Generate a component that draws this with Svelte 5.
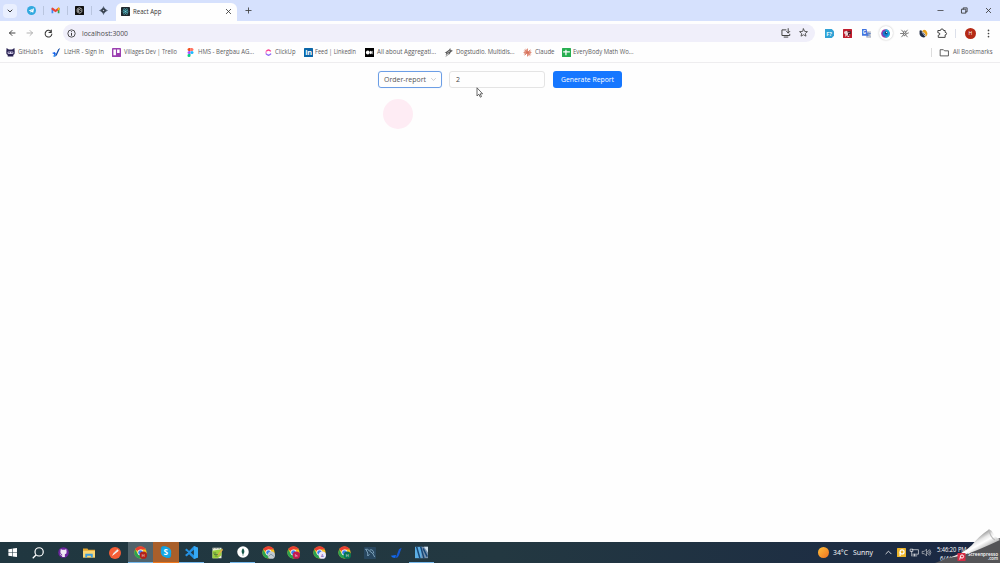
<script>
  const chrome = `<circle cx="8" cy="8" r="7.5" fill="#f8c31c"/><path d="M8 8L1.5 4.2A7.5 7.5 0 0 1 14.5 4.2H8Z" fill="#e93f32"/><path d="M1.5 4.2A7.5 7.5 0 0 0 8 15.5L11.3 9.8 8 8 4.8 9.9Z" fill="#2aa350"/><circle cx="8" cy="8" r="3.6" fill="#fff"/><circle cx="8" cy="8" r="2.8" fill="#3d7ee8"/>`;
  const chromeBadge = (color, letter) => chrome + `<circle cx="11.5" cy="11.3" r="4.5" fill="${color}"/><text x="11.5" y="13.2" text-anchor="middle" font-size="5" fill="${color === '#eee8fa' ? '#664baf' : '#fff'}">${letter}</text>`;
  const line = (d, color = '#444', w = 1.5) => `<path d="${d}" fill="none" stroke="${color}" stroke-width="${w}" stroke-linecap="round" stroke-linejoin="round"/>`;

  const icons = {
    down: line('M4 6L8 10L12 6', '#333', 2),
    selectDown: line('M1.5 4.5L8 11L14.5 4.5', '#999', 1.5),
    telegram: `<circle cx="8" cy="8" r="8" fill="#31a9df"/><path d="M3 8L12.5 4L11 12L8 10L6.5 12L6 9.3Z" fill="#fff"/><path d="M6 9.3L10.5 6" stroke="#80c5df"/>`,
    gmail: `<path d="M1 13V4l3 2v7z" fill="#4285f4"/><path d="M12 13V6l3-2v9z" fill="#34a853"/><path d="M1 3.5Q2 2 4 3.5L8 6.8L12 3.5Q14 2 15 3.5V6L8 11L1 6Z" fill="#e94335"/><path d="M12 3.5q2-1.5 3 0V6l-3 2z" fill="#fbbc04"/>`,
    gpt: `<rect width="16" height="16" rx="1" fill="#111"/><path d="M8 2.7L12.3 5.2V10.5L8 13.2L3.7 10.5V5.2ZM5.5 3.9V9.5L10 12M10.6 4.2L5.5 7V12M12 9L7 6" fill="none" stroke="#ddd" stroke-width="1"/>`,
    cross: `<path d="M8 0L10.5 5L16 8L10.5 11L8 16L5.5 11L0 8L5.5 5Z" fill="#59677b"/><circle cx="8" cy="8" r="4" fill="#343d49"/><circle cx="8" cy="8" r="1.3" fill="#c4cadb"/>`,
    react: `<rect width="16" height="16" rx="1.5" fill="#20272c"/><g fill="none" stroke="#51b5c3" stroke-width=".9"><ellipse cx="8" cy="8" rx="6" ry="2.3"/><ellipse cx="8" cy="8" rx="6" ry="2.3" transform="rotate(60 8 8)"/><ellipse cx="8" cy="8" rx="6" ry="2.3" transform="rotate(120 8 8)"/></g><circle cx="8" cy="8" r="1.2" fill="#6bd6df"/>`,
    close: line('M3 3L13 13M13 3L3 13', '#333', 1.9),
    plus: line('M2 8H14M8 2V14', '#444', 2),
    min: line('M2 8H14', '#333', 1.7),
    restore: line('M2 5H11V14H2ZM5 5V2H14V11H11', '#333', 1.9),
    back: line('M14 8H3M8 3L3 8L8 13', '#333', 1.8),
    forward: line('M2 8H13M8 3L13 8L8 13', '#aaa', 1.8),
    reload: line('M13 5A6 6 0 1 0 14 9M13 2V6H9', '#333', 1.8),
    info: `<circle cx="8" cy="8" r="6.5" fill="none" stroke="#333" stroke-width="1.5"/><path d="M8 7v5M8 4v1.5" stroke="#333" stroke-width="1.7"/>`,
    install: line('M8 3H1.5V12H14V10M5 14.5H11M11.5 1V8M9 5.5L11.5 8L14 5.5', '#444', 1.6),
    star: line('M8 1.5L10 6L15 6.5L11.3 9.7L12.4 14.5L8 12L3.6 14.5L4.7 9.7L1 6.5L6 6Z', '#444', 1.5),
    github: `<path d="M1 0L5 2.5H11L15 0L15.5 7Q16 12 13 12.5V15H3V12.5Q0 12 .5 7Z" fill="#292252"/><rect x="2.8" y="6" width="10.4" height="4.5" rx="2.2" fill="#d9d3ef"/><path d="M5.5 6.5v3M10.5 6.5v3" stroke="#292252" stroke-width="1.8"/>`,
    liz: `<path d="M14.5 0L9 12Q8 15 5 15L11 2Z" fill="#174ea6"/><path d="M0 9L5 7L7 10L5 14Q4 10 0 9Z" fill="#0f60ee"/><path d="M1 14L6 12L5 16Z" fill="#2389f2"/>`,
    trello: `<rect width="16" height="16" rx="1.5" fill="#9b3fb0"/><path d="M2.5 2.5H7V13H2.5ZM9 2.5H13.5V9H9Z" fill="#fff"/>`,
    figma: `<path d="M8 0H5.5a2.7 2.7 0 0 0 0 5.4H8Z" fill="#f24e1e"/><path d="M8 0h2.5a2.7 2.7 0 0 1 0 5.4H8Z" fill="#ff7262"/><path d="M8 5.4H5.5a2.7 2.7 0 0 0 0 5.4H8Z" fill="#a259ff"/><circle cx="10.7" cy="8" r="2.7" fill="#1abcfe"/><path d="M5.5 10.8H8v2.5a2.7 2.7 0 1 1-2.5-2.5Z" fill="#0acf83"/>`,
    clickup: `<path d="M4 6Q8 1 12 6" fill="none" stroke="#fa3b91" stroke-width="2.4"/><path d="M3.5 10Q8 15.5 12.5 10" fill="none" stroke="#8b60f5" stroke-width="2.6"/><path d="M3.5 6v4" stroke="#f25fc0" stroke-width="1.6"/>`,
    linkedin: `<rect width="16" height="16" rx="1" fill="#0a66a8"/><text x="2" y="13" font-size="13" font-weight="700" fill="#fff">in</text>`,
    medium: `<rect width="16" height="16" fill="#000"/><circle cx="5" cy="8" r="3.4" fill="#fff"/><ellipse cx="10.4" cy="8" rx="1.8" ry="3.2" fill="#fff"/><path d="M13.5 5v6" stroke="#fff"/>`,
    dog: `<path d="M1 9L9 3L11 0L12 4L16 5L11 8L9 12L8 9L3 13L4 9Z" fill="#555"/><path d="M3 15L12 8M7 7L14 4" stroke="#555" stroke-width="1.2"/><path d="M6 8L11 5" stroke="#fff"/>`,
    claude: `<path d="M8 1V15M1 8H15M3 3L13 13M13 3L3 13M5 1.5L11 14.5M1.5 11L14.5 5M1.5 5L14.5 11" stroke="#d66e55" stroke-width="1.4"/>`,
    sheet: `<rect width="16" height="16" rx="1" fill="#27ae50"/><path d="M7 3V13M2 7H14" stroke="#fff" stroke-width="2.2"/>`,
    folder: line('M1 3H6L8 5H15V14H1Z', '#444', 1.5),
    fontx: `<path d="M0 0H12L16 4V12L12 16H0Z" fill="#31a2d5"/><text x="2" y="12" font-size="10" font-weight="700" fill="#e7faff">F?</text>`,
    redx: `<rect width="16" height="16" rx="1" fill="#bf1d2d"/><path d="M2 5L6 3L9 5H14V8L11 10V14H8V10L4 14V9L2 8Z" fill="#ecd6d8"/><path d="M8 5H13V8H10V12" stroke="#43121c" fill="none" stroke-width="2"/>`,
    translate: `<path d="M5 4H16V16H8Z" fill="#c8cbd2"/><path d="M0 0H8L11 12H0Z" fill="#4174df"/><text x="1.5" y="9" font-size="8" font-weight="700" fill="#fff">G</text>${line('M9 8H15M12 6V8M14 8Q12 12 9 13M10 9L14 13', '#4775ca', 1)}`,
    eye: `<circle cx="8" cy="8" r="7.7" fill="#9a39ad"/><path d="M8 .3A7.7 7.7 0 0 1 8 15.7Z" fill="#18b6da"/><circle cx="8" cy="8" r="5" fill="#197bd2"/><circle cx="9" cy="7" r="2.4" fill="#154370"/><circle cx="10" cy="6" r="1" fill="#fff"/>`,
    bug: line('M3 2L13 14M13 2L10 6M1 8H6M10 9L15 7M3 14L6 10M7 4Q4 8 7 12Q12 12 10 5Z', '#737373', 1.6),
    swirl: `<path d="M1 3Q3 1 5 3L11 10Q13 14 8 15Q2 14 1 9Z" fill="#222f48"/><path d="M6 4Q7 0 12 2Q18 8 12 14Q13 8 6 4Z" fill="#eaa21c"/><path d="M5 5L11 13" stroke="#fff" stroke-width="1.2"/>`,
    puzzle: line('M2 4H5.5Q5.5 1.5 8 1.5Q10.5 1.5 10.5 4H13V7Q15.3 7 15.3 9Q15.3 11 13 11V15H2V11.5Q4.6 11.5 4.6 9.5Q4.6 7.5 2 7.5Z', '#444', 1.6),
    menu: `<g fill="#444"><circle cx="8" cy="2.5" r="1.5"/><circle cx="8" cy="8" r="1.5"/><circle cx="8" cy="13.5" r="1.5"/></g>`,
    win: `<path d="M2 3.2L7.4 2.4V7.5H2ZM8.2 2.3L14.5 1.5V7.5H8.2ZM2 8.4H7.4V13.6L2 12.8ZM8.2 8.4H14.5V14.5L8.2 13.7Z" fill="#fff"/>`,
    search: `<circle cx="9.5" cy="6.5" r="5.5" fill="none" stroke="#fff" stroke-width="1.6"/><path d="M5.6 10.4L1 15" stroke="#fff" stroke-width="1.7"/>`,
    githubT: `<circle cx="8" cy="8" r="7.7" fill="#6b249d"/><path d="M4 3L6 4H10L12 3L12.5 7Q13 10 10 10.5V14.5H6V10.5Q3 10 3.5 7Z" fill="#eee9f4"/><path d="M3 10Q4 13 6 12" stroke="#eee" fill="none"/>`,
    explorer: `<path d="M0 2H6L7 3.5H16V14H0Z" fill="#e6a72e"/><path d="M0 5H16V14H0Z" fill="#f9d675"/><path d="M3 14V9H13V14H10.5V11.5H5.5V14Z" fill="#3d9de0"/>`,
    postman: `<circle cx="8" cy="8" r="8" fill="#f45d36"/><path d="M4 12L6 8L11 3L13 5L8 9Z" fill="#fff"/><path d="M6 9L11 4" stroke="#b8b1ab"/>`,
    chromeH: chromeBadge('#b52118', 'H'),
    skype: `<rect x="1" y="0" width="9" height="9" rx="4.5" fill="#169bd7"/><rect x="6" y="7" width="9" height="9" rx="4.5" fill="#169bd7"/><circle cx="8" cy="8" r="7" fill="#16a7e4"/><text x="4.8" y="12" font-size="11" font-weight="700" fill="#fff">S</text>`,
    code: `<path d="M11 0L16 2V14L11 16L5 10L2 13L0 11L4 8L0 5L2 3L5 6Z" fill="#2492e4"/><path d="M11 4.5V11.5L7 8Z" fill="#203c4b"/><path d="M11 0L16 2V14L11 16Z" fill="#36aaf5"/>`,
    note: `<path d="M2 1H14V15H2Z" fill="#e9edda"/><path d="M2 5L14 3V11L9 15H2Z" fill="#9bd13e"/><path d="M3 2H13" stroke="#777" stroke-dasharray="1 1"/><path d="M3 8H7M4 10H10M5 12H9" stroke="#486a38"/><path d="M15 2L9 10L8 12L10 11L16 4Z" fill="#e1ac4a"/>`,
    mongo: `<circle cx="8" cy="8" r="7.7" fill="#fff"/><path d="M8 3Q11.5 7 8.4 11V13H7.6V11Q4.5 7 8 3" fill="#165849"/>`,
    chromeA: chrome + `<circle cx="11.5" cy="11.3" r="4.5" fill="#c4cbd0"/><path d="M8 13L11 10L15 13" stroke="#7894a4" fill="none"/>`,
    chromeB: chromeBadge('#c41850', 'h'),
    chromeC: chromeBadge('#eee8fa', 'A'),
    chromeD: chromeBadge('#087451', 'H'),
    mysql: `<rect width="16" height="16" rx="1" fill="#28475f"/>${line('M2 3Q5 2 7 5L12 9L14 13M3 4L5 8V12L7 10M8 4Q12 2 13 8', '#86abc4', 1.2)}`,
    lizT: `<path d="M15.5 1L12 11Q11 14.5 7.5 14.5L12 3Z" fill="#1558d2"/><path d="M1 11.5L8 10.5L7 14.5Q3 14.5 1 11.5Z" fill="#126af3"/>`,
    press: `<path d="M0 1H9V15H0Z" fill="#5caee3"/><path d="M8 1H16V15H8Z" fill="#7891ac"/><path d="M2 1L6 15M7 1L11 15M10 3L15 13" stroke="#174777" stroke-width="1.8"/><path d="M11 1L16 8V1" fill="#d2e2ee"/>`,
    up: line('M2 11L8 5L14 11', '#fff', 1.8),
    p: `<rect width="16" height="16" rx="1" fill="#ecb52b"/><circle cx="9" cy="7" r="3.6" fill="none" stroke="#fff" stroke-width="2"/><path d="M5.5 7V14" stroke="#fff" stroke-width="2"/>`,
    net: line('M4 3H15V11H5M8 11V14M5 14H12M1 2H5V6H1ZM3 6V14', '#fff', 1.1),
    sound: line('M1 6H4L8 2V14L4 10H1ZM10 6Q12 8 10 10M12 4Q15 8 12 12M14 3Q18 8 14 13', '#ddd', 1),
    screenpresso: `<rect width="16" height="16" rx="1" fill="#d72c45"/><circle cx="9" cy="7" r="3.2" fill="none" stroke="#fff" stroke-width="2"/><path d="M6 7L4.5 13" stroke="#fff" stroke-width="2"/>`
  };

  const pinned = [['telegram', 9], ['gmail', 9], ['gpt', 9], ['cross', 9]];
  const bookmarks = [
    ['github', 'GitHub1s', 25, 46], ['liz', 'LizHR - Sign In', 40, 60], ['trello', 'Villages Dev | Trello', 53, 74],
    ['figma', 'HMS - Bergbau AG...', 56, 77.5], ['clickup', 'ClickUp', 20.5, 40], ['linkedin', 'Feed | LinkedIn', 41, 61.5],
    ['medium', 'All about Aggregati...', 59, 79], ['dog', 'Dogstudio. Multidis...', 58.5, 79],
    ['claude', 'Claude', 19.5, 38.5], ['sheet', 'EveryBody Math Wo...', 60.5, 75]
  ];
  const extensions = ['fontx', 'redx', 'translate', 'eye', 'bug', 'swirl', 'puzzle'];
  const tasks = [
    ['win'], ['search', '', 12], ['githubT'], ['explorer', '', 12], ['postman', '', 12], ['chromeH', 'active line', 13],
    ['skype', 'orange', 12], ['code', 'line', 13], ['note', '', 12], ['mongo', 'line', 12], ['chromeA', '', 13], ['chromeB', '', 13],
    ['chromeC', '', 13], ['chromeD', '', 13], ['mysql', '', 12], ['lizT', '', 12], ['press', 'line', 13]
  ];
</script>

{#snippet icon(name, size = 10)}
  <svg class="icon" width={size} height={size} viewBox="0 0 16 16">{@html icons[name]}</svg>
{/snippet}

{#snippet label(text, width, size, color)}
  <svg class="label" {width} height={size + 4}><text x="0" y={size + 1} font-size={size} fill={color} textLength={width} lengthAdjust="spacingAndGlyphs">{text}</text></svg>
{/snippet}

<div class="screen">
  <header>
    <div class="tabs">
      <button class="tabsearch" aria-label="Search tabs">{@render icon('down', 8)}</button>
      {#each pinned as [name, size], i}
        <div class="pinned" class:last={i === 3}>{@render icon(name, size)}</div>
      {/each}
      <div class="tab">
        {@render icon('react', 9)}
        {@render label('React App', 28.5, 6.5, '#333')}
        <span class="tabclose">{@render icon('close', 7)}</span>
      </div>
      <div class="newtab">{@render icon('plus', 7)}</div>
      <div class="window">{@render icon('min', 7)}{@render icon('restore', 7)}{@render icon('close', 7)}</div>
    </div>
    <div class="toolbar">
      <div class="nav">{@render icon('back', 8)}{@render icon('forward', 8)}{@render icon('reload', 9)}</div>
      <div class="address">
        {@render icon('info', 9)}
        {@render label('localhost:3000', 46, 7, '#4b4b4f')}
        <div class="pageactions">{@render icon('install', 10)}{@render icon('star', 9)}</div>
      </div>
      <div class="extensions">
        {#each extensions as name}<span class:round={name === 'eye'}>{@render icon(name, name === 'puzzle' ? 10 : 9)}</span>{/each}
      </div>
      <div class="divider"></div>
      <div class="profile">H</div>
      <div class="menu">{@render icon('menu', 9)}</div>
    </div>
    <nav class="bookmarks">
      {#each bookmarks as [name, text, width, cell]}
        <div class="bookmark" style:width="{cell}px">{@render icon(name, 9)}{@render label(text, width, 6.3, '#5c5c60')}</div>
      {/each}
      <div class="all">{@render icon('folder', 9)}{@render label('All Bookmarks', 39.5, 6.3, '#5c5c60')}</div>
    </nav>
  </header>

  <main>
    <div class="form">
      <div class="select">{@render label('Order-report', 42, 7.2, '#555')}<span>{@render icon('selectDown', 5)}</span></div>
      <div class="input">{@render label('2', 4, 7.2, '#444')}</div>
      <button class="generate">{@render label('Generate Report', 53, 7.2, '#fff')}</button>
    </div>
    <div class="click"></div>
    <svg class="cursor" width="7" height="11" viewBox="0 0 7 11"><path d="M1 .8V9L2.9 7.2L4.3 10.2L5.5 9.6L4.2 6.8H6.6Z" fill="#fff" stroke="#444" stroke-width=".8"/></svg>
  </main>

  <footer>
    {#each tasks as [name, kind, size]}
      <div class="task {kind ?? ''}">{@render icon(name, size ?? 11)}</div>
    {/each}
    <div class="tray">
      <span class="sun"></span>
      {@render label('34°C', 15, 7, '#fff')}
      <span class="sunny">{@render label('Sunny', 20, 7, '#fff')}</span>
      <span class="chevron">{@render icon('up', 7)}</span>
      {@render icon('p', 9)}
      <span class="network">{@render icon('net', 9)}</span>
      {@render icon('sound', 9)}
      <div class="clock">{@render label('5:46:20 PM', 29.5, 6.5, '#fff')}<span>{@render label('6/4/', 11, 6.5, '#fff')}</span></div>
    </div>
  </footer>
  <div class="corner">
    <svg width="65" height="35" viewBox="0 0 65 35">
      <defs><linearGradient id="fold" gradientUnits="userSpaceOnUse" x1="39" y1="9" x2="48" y2="25"><stop offset="0" stop-color="#8f8f8f"/><stop offset=".3" stop-color="#e8e8e8"/><stop offset=".5" stop-color="#fff"/><stop offset="1" stop-color="#999"/></linearGradient></defs>
      <path d="M0 35L65 10V35Z" fill="#545457"/>
      <path d="M13 30Q28 26 37 17Q44 8 54 1.5Q57 2 58 5Q60 9 65 12Q50 19 40 23Q28 28 13 30Z" fill="url(#fold)"/>
      <path d="M54 1.5Q55 9 60 12" fill="none" stroke="#bbb" stroke-width="1.3"/>
      <g transform="translate(22.5 25) scale(.5)">{@html icons.screenpresso}</g>
      <text x="33" y="28.3" font-size="4.6" font-weight="600" fill="#fff" textLength="30" lengthAdjust="spacingAndGlyphs">Screenpresso</text>
      <text x="53" y="32.4" font-size="4.4" font-weight="600" fill="#fff" textLength="10" lengthAdjust="spacingAndGlyphs">.com</text>
    </svg>
  </div>
</div>

<style>
  :global(body) { margin: 0; }
  * { box-sizing: border-box; }
  .screen { position: relative; width: 1000px; height: 563px; overflow: hidden; display: flex; flex-direction: column; background: #fefefe; font-family: "Open Sans", "Noto Sans", sans-serif; }
  .icon, .label { display: block; flex: none; overflow: visible; }
  button { border: 0; padding: 0; font: inherit; }
  header { height: 63px; flex: none; border-bottom: 1px solid #eeedef; }
  .tabs { height: 21px; display: flex; align-items: center; background: #d6e1fd; }
  .tabsearch { width: 14px; height: 14px; margin-left: 3px; border-radius: 4px; background: #e9effe; display: grid; place-items: center; }
  .pinned { width: 24px; height: 9px; display: flex; align-items: center; justify-content: center; border-right: 1px solid #b9c5df; }
  .tabsearch + .pinned { margin-left: 2.5px; }
  .pinned.last { border: 0; }
  .tab { width: 121px; height: 18px; align-self: flex-end; margin-left: .5px; padding: 0 5px 1px 4.5px; display: flex; align-items: center; gap: 3.5px; background: #fefefe; border-radius: 6px 6px 0 0; }
  .tabclose { margin-left: auto; }
  .newtab { margin-left: 7.5px; }
  .window { margin-left: auto; display: flex; gap: 17px; padding-right: 8.5px; }
  .toolbar { height: 24px; display: flex; align-items: center; background: #fefefe; }
  .nav { width: 63px; padding-left: 7.5px; display: flex; align-items: center; gap: 10.5px; }
  .nav :global(.icon:last-child) { margin-left: -1px; }
  .address { width: 752px; height: 18px; border-radius: 9px; background: #f0effa; display: flex; align-items: center; gap: 6px; padding: 0 7.5px 0 4px; }
  .pageactions { margin-left: auto; display: flex; gap: 7.5px; }
  .extensions { margin-left: 7px; display: flex; align-items: center; gap: 4.9px; }
  .extensions span { width: 14px; height: 14px; border-radius: 50%; display: grid; place-items: center; }
  .extensions .round { background: #fff; box-shadow: 0 0 2px #bbb; }
  .divider { margin-left: 6px; width: 1px; height: 9px; background: #dce0ea; }
  .profile { margin-left: 8.5px; width: 11px; height: 11px; border-radius: 50%; background: #b52a16; color: #fff; font-size: 5px; display: grid; place-items: center; }
  .menu { margin-left: 8.5px; }
  .bookmarks { height: 15px; display: flex; align-items: center; padding-left: 6px; background: #fefefe; }
  .bookmark { display: flex; align-items: center; gap: 2.7px; }
  .all { margin-left: auto; height: 9px; padding: 0 7.5px 0 8px; display: flex; align-items: center; gap: 4px; border-left: 1px solid #ddd; }
  main { position: relative; flex: 1; }
  .form { display: flex; align-items: center; padding: 8px 0 0 378px; }
  .select { width: 64px; height: 17px; border: 1px solid #6c9ee5; border-radius: 3px; display: flex; align-items: center; justify-content: space-between; padding: 0 5px; box-shadow: 0 0 1px #bed6fa; }
  .input { margin-left: 7px; width: 96px; height: 17px; border: 1px solid #e4e4e4; border-radius: 3px; display: flex; align-items: center; padding-left: 5.5px; }
  .generate { margin-left: 7.5px; width: 69.5px; height: 17px; border-radius: 3px; background: #1677ff; display: grid; place-items: center; }
  .click { position: absolute; left: 382.5px; top: 36px; width: 30px; height: 30px; border-radius: 50%; background: #feecf4; }
  .cursor { position: absolute; left: 475.5px; top: 24px; }
  footer { height: 21px; flex: none; display: flex; background: linear-gradient(90deg, #203740 0%, #233841 50%, #1d2d43 85%, #1a2743 100%); }
  .task { width: 25.55px; height: 21px; display: grid; place-items: center; }
  .task.active { background: #51636b; }
  .task.orange { background: #a95f2a; }
  .task.line { border-bottom: 1px solid #76b9ed; }
  .task.orange { border-bottom: 1px solid #ef791e; }
  .tray { margin-left: auto; display: flex; align-items: center; width: 183px; height: 21px; }
  .sun { width: 11px; height: 11px; border-radius: 50%; background: linear-gradient(135deg, #ffc03b, #ef7120); margin: 0 4.5px 0 .5px; }
  .sunny { margin-left: 5px; }
  .chevron { margin: 0 5px 0 12px; }
  .network { margin: 0 3px 0 4px; }
  .clock { margin-left: 6px; height: 21px; display: flex; flex-direction: column; justify-content: center; }
  .clock span { padding-left: 3px; }
  .clock :global(.label) { height: 9px; }
  .corner { position: absolute; right: 0; bottom: 0; width: 65px; height: 35px; }
</style>
